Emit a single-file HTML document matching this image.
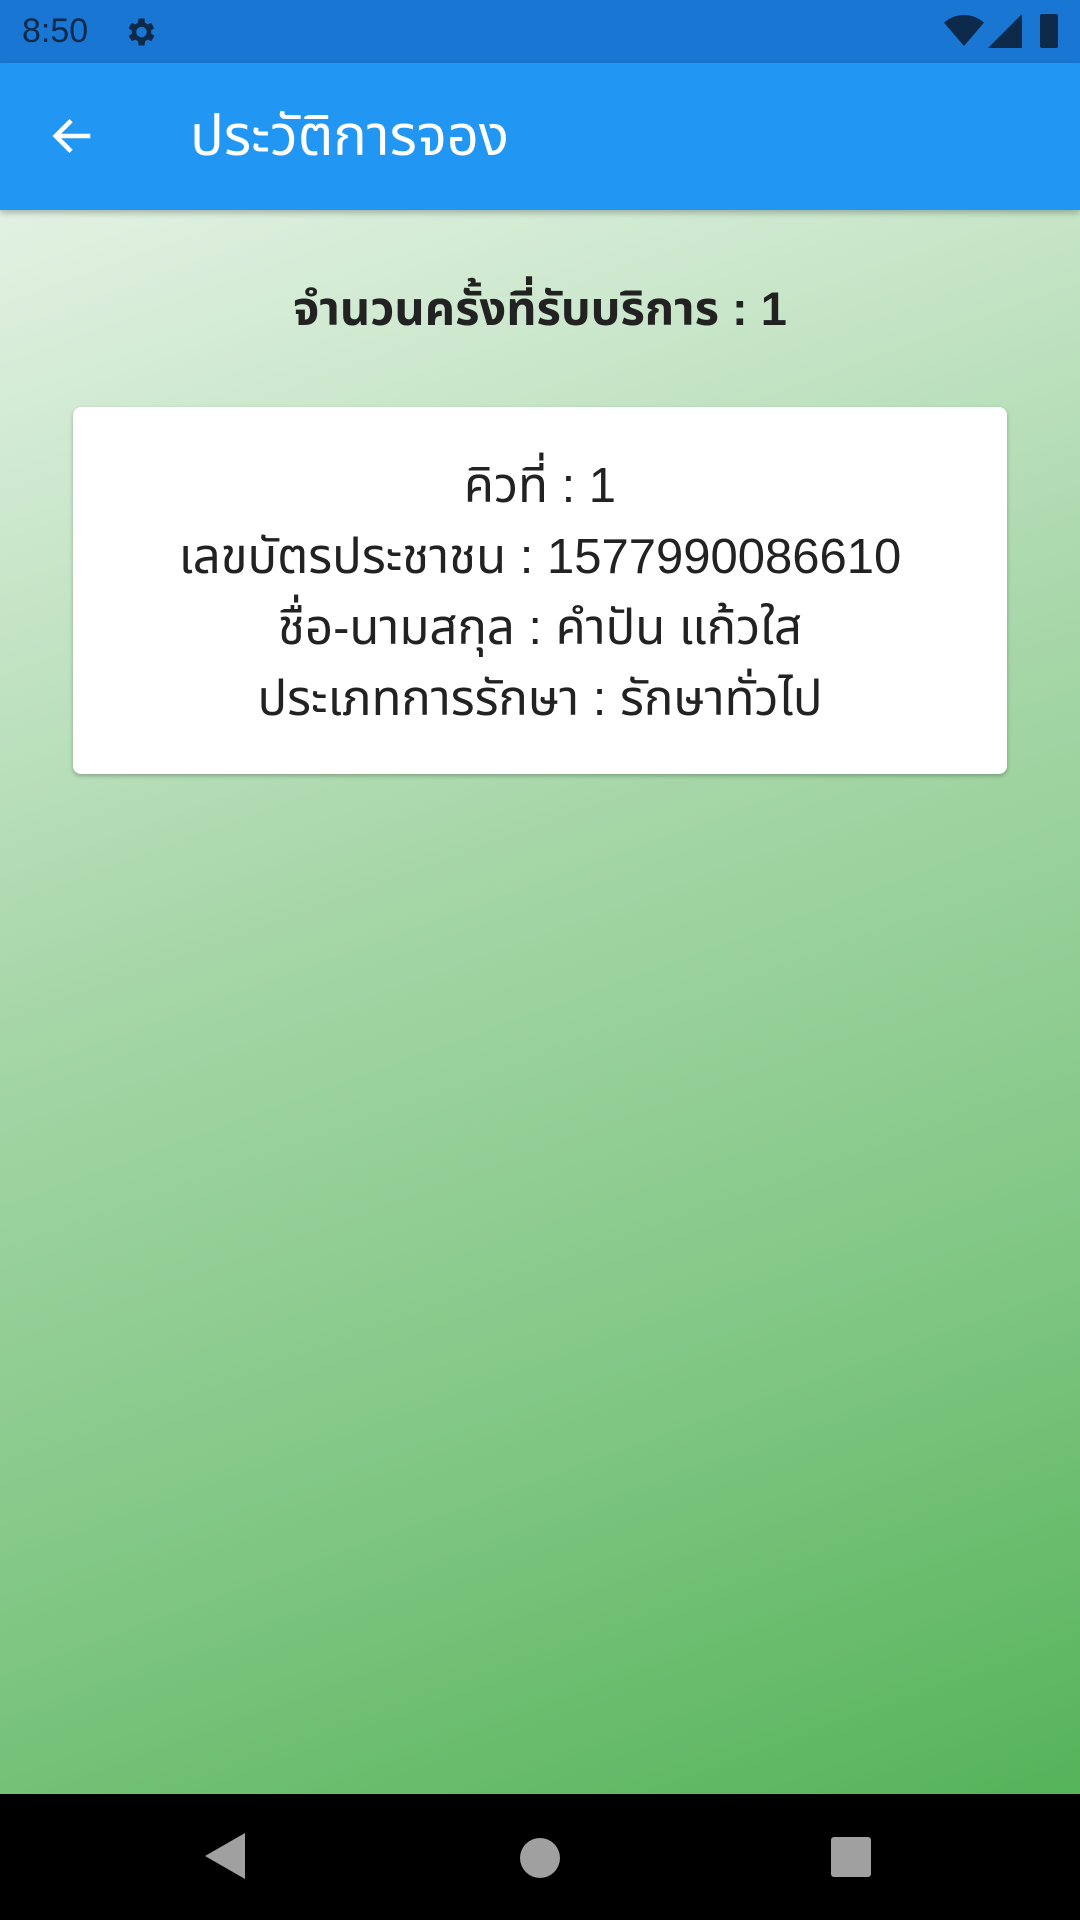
<!DOCTYPE html>
<html><head><meta charset="utf-8"><style>
*{margin:0;padding:0;box-sizing:border-box}
body{width:1080px;height:1920px;overflow:hidden;font-family:"Liberation Sans","Noto Sans Thai","Loma","Garuda",sans-serif;position:relative;background:linear-gradient(160deg,#f1f8f1 0%,#c8e6c9 25%,#a5d6a7 45%,#81c784 70%,#4caf50 100%)}
.status{position:absolute;top:0;left:0;width:1080px;height:63px;background:#1976d2;color:#0d2a4a}
.appbar{position:absolute;top:63px;left:0;width:1080px;height:147px;background:#2196f3;box-shadow:0 3px 6px rgba(0,0,0,.25)}
.title{position:absolute;left:190px;top:34px;color:#fff;font-size:56px}
.h{position:absolute;top:276px;left:0;width:1080px;text-align:center;font-size:47px;font-weight:bold;color:#222}
.card{position:absolute;left:73px;top:407px;width:934px;height:367px;background:#fff;border-radius:8px;box-shadow:0 2px 4px rgba(0,0,0,.25);text-align:center;font-size:49px;color:#222;padding-top:44px;line-height:71px}
.nav{position:absolute;top:1794px;left:0;width:1080px;height:126px;background:#000}
</style></head><body>
<div class="status">
<div style="position:absolute;left:22px;top:12px;font-size:34px;color:#0d2a4a">8:50</div>
<svg style="position:absolute;left:122px;top:14px" width="36" height="36" viewBox="0 0 24 24"><path fill="#0d2a4a" d="M19.4 13a7.5 7.5 0 000-2l2.1-1.6-2-3.5-2.5 1a7 7 0 00-1.7-1L15 3h-4l-.4 2.9a7 7 0 00-1.7 1l-2.5-1-2 3.5L6.6 11a7.5 7.5 0 000 2l-2.1 1.6 2 3.5 2.5-1a7 7 0 001.7 1L11 21h4l.4-2.9a7 7 0 001.7-1l2.5 1 2-3.5zM13 15.5a3.5 3.5 0 110-7 3.5 3.5 0 010 7z"/></svg>
<svg style="position:absolute;left:944px;top:14px" width="40" height="34" viewBox="0 0 24 20"><path fill="#0d2a4a" d="M12 19L0 5a18 18 0 0124 0z"/></svg>
<svg style="position:absolute;left:988px;top:14px" width="34" height="34" viewBox="0 0 20 20"><path fill="#0d2a4a" d="M20 0v20H0z"/></svg>
<div style="position:absolute;left:1040px;top:14px;width:18px;height:34px;background:#0d2a4a;border-radius:2px"></div>
</div>
<div class="appbar">
<svg style="position:absolute;left:50px;top:50px" width="46" height="46" viewBox="0 0 24 24"><path fill="none" stroke="#fff" stroke-width="2.4" d="M21 12H4M11 4l-8 8 8 8"/></svg>
<div class="title">ประวัติการจอง</div>
</div>
<div class="h">จำนวนครั้งที่รับบริการ : 1</div>
<div class="card">คิวที่ : 1<br>เลขบัตรประชาชน : 1577990086610<br>ชื่อ-นามสกุล : คำปัน แก้วใส<br>ประเภทการรักษา : รักษาทั่วไป</div>
<div class="nav">
<svg style="position:absolute;left:205px;top:39px" width="40" height="46" viewBox="0 0 20 23"><path fill="#a0a0a0" d="M20 0v23L0 11.5z"/></svg>
<div style="position:absolute;left:520px;top:44px;width:40px;height:40px;border-radius:50%;background:#a0a0a0"></div>
<div style="position:absolute;left:831px;top:43px;width:40px;height:40px;border-radius:3px;background:#a0a0a0"></div>
</div>
</body></html>
